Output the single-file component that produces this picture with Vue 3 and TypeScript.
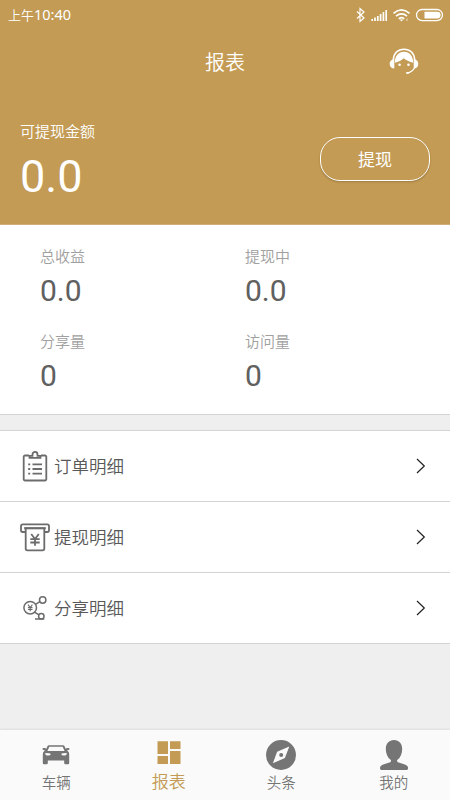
<script setup lang="ts">
import { ref } from 'vue';

interface Stat {
    label: string;
    value: string;
}

interface Entry {
    key: string;
    title: string;
}

const balance = ref('0.0');

const stats = ref<Stat[]>([
    { label: '总收益', value: '0.0' },
    { label: '提现中', value: '0.0' },
    { label: '分享量', value: '0' },
    { label: '访问量', value: '0' }
]);

const entries: Entry[] = [
    { key: 'order', title: '订单明细' },
    { key: 'withdraw', title: '提现明细' },
    { key: 'share', title: '分享明细' }
];

const tabs: Entry[] = [
    { key: 'car', title: '车辆' },
    { key: 'report', title: '报表' },
    { key: 'news', title: '头条' },
    { key: 'mine', title: '我的' }
];

// 当前选中的标签
const activeTab = ref('report');
</script>

<template>
    <div class="page">
        <header class="header">
            <!-- 状态栏 -->
            <div class="status">
                <span class="status-time">上午<span class="status-digits">10:40</span></span>
                <svg class="status-icons" width="90" height="16" viewBox="0 0 90 16" fill="none" stroke="#fff">
                    <path d="M2 4.5l7 6.5-4 3.5v-13l4 3.5-7 6.5" stroke-width="1.2" />
                    <path d="M17.2 14v-2M20 14v-3.5M22.8 14v-5M25.6 14v-7M28.4 14v-9M31.2 14v-11" stroke-width="1.7" />
                    <path d="M38.5 6.3q8-7 16 0M41 9.2q5.5-4.5 11 0M43.8 11.8q2.7-2.2 5.4 0" stroke-width="1.6" />
                    <path d="M44.7 12.4h3.6l-1.8 2z" fill="#fff" stroke="none" />
                    <path d="M52 11.5v2.5" stroke-width="1.3" opacity=".5" />
                    <rect x="61.5" y="2.5" width="26" height="11.2" rx="5.6" stroke-width="1.3" />
                    <path d="M69.5 4.7h12.7a3.4 3.4 0 0 1 0 6.8H69.5z" fill="#fff" stroke="none" />
                </svg>
            </div>
            <div class="navbar">
                <span class="navbar-title">报表</span>
                <svg class="service" width="30" height="28" viewBox="0 0 30 28" fill="#fff">
                    <path d="M4.3 12C4.5 5.2 9 1.2 15 1.2S25.5 5.2 25.7 12" fill="none" stroke="#fff" stroke-width="1.6" />
                    <path d="M5.8 14.8C5.8 8 9.5 3.8 15 3.8S24.2 8 24.2 14.8C20.5 13.8 16.5 12 14.6 10.2C12.5 12.2 9.7 14 5.8 14.800z" />
                    <path d="M5.3 11.3v9.200C2.500 20.500.7 18.500.7 16s1.800-4.700 4.600-4.700zM24.700 11.300v9.200c2.800 0 4.600-2 4.600-4.500s-1.800-4.700-4.600-4.700z" />
                    <circle cx="10.6" cy="16.8" r="1.3" />
                    <circle cx="19.5" cy="16.8" r="1.3" />
                    <path d="M25.7 19.5c-1.5 3-4 5-7.700 5.500" fill="none" stroke="#fff" stroke-width="1.2" />
                    <ellipse cx="18.5" cy="24.9" rx="1.6" ry=".9" />
                </svg>
            </div>
            <div class="balance">
                <div>
                    <div class="balance-label">可提现金额</div>
                    <div class="balance-value">{{ balance }}</div>
                </div>
                <button class="withdraw">提现</button>
            </div>
        </header>

        <!-- 数据统计 -->
        <section class="stats">
            <div v-for="item in stats" :key="item.label" class="stat">
                <div class="stat-label">{{ item.label }}</div>
                <div class="stat-value">{{ item.value }}</div>
            </div>
        </section>

        <!-- 明细入口 -->
        <section class="entries">
            <div v-for="item in entries" :key="item.key" class="entry">
                <svg class="entry-icon" width="30" height="32" viewBox="0 0 30 32" fill="none" stroke="#6c6c6c" stroke-width="1.8">
                    <template v-if="item.key === 'order'">
                        <path d="M9 5.5H5a1.3 1.3 0 0 0-1.3 1.3v22.4a1.3 1.3 0 0 0 1.3 1.3h20a1.3 1.3 0 0 0 1.3-1.3V6.800A1.3 1.3 0 0 0 25 5.5h-4" />
                        <path d="M9.5 7.8V5.900h3V4.400a2.500 2.500 0 0 1 5 0v1.500h3v1.900z" />
                        <path d="M8.2 14.3h2M12.5 14.3h9.500M8.2 19h2M12.5 19h9.500M8.2 23.6h2M12.5 23.6h9.500" />
                    </template>
                    <template v-else-if="item.key === 'withdraw'">
                        <path d="M5 11H2.7A1.7 1.7 0 0 1 1 9.3V5a1.7 1.7 0 0 1 1.7-1.7h24.6A1.7 1.7 0 0 1 29 5v4.3a1.7 1.7 0 0 1-1.7 1.7H25" />
                        <path d="M4.2 7.2h21.6" stroke-width="2.2" />
                        <path d="M5.7 7.2v20.4a1.8 1.8 0 0 0 1.8 1.8h15a1.8 1.8 0 0 0 1.8-1.8V7.2" />
                        <path d="M11.2 13l3.8 5 3.8-5M15 18v6.7M10.3 18.2h9.4M10.3 21.5h9.4" />
                    </template>
                    <template v-else>
                        <circle cx="10.2" cy="15.7" r="6.3" stroke-width="1.5" />
                        <circle cx="22.7" cy="8" r="3.2" stroke-width="1.5" />
                        <circle cx="21.3" cy="24.2" r="2.7" stroke-width="1.5" />
                        <path d="M15.5 12.3l4.4-2.6M14.6 20.2l4.3 2.6M15 26.9h9.3" stroke-width="1.5" />
                        <path d="M8 12.6l2.2 2.9 2.2-2.9M10.2 15.5v3.7M7.9 15.6h4.6M7.9 17.5h4.6" stroke-width="1.1" />
                    </template>
                </svg>
                <span class="entry-title">{{ item.title }}</span>
                <svg class="entry-arrow" width="10" height="16" viewBox="0 0 10 16" fill="none" stroke="#222" stroke-width="1.2">
                    <path d="M1 1l7.3 7L1 15" />
                </svg>
            </div>
        </section>

        <!-- 底部标签栏 -->
        <nav class="tabbar">
            <div
                v-for="tab in tabs"
                :key="tab.key"
                class="tab"
                :class="{ 'tab-active': tab.key === activeTab }"
                @click="activeTab = tab.key"
            >
                <svg class="tab-icon" width="30" height="30" viewBox="0 0 30 30" fill="currentColor">
                    <path
                        v-if="tab.key === 'car'"
                        fill-rule="evenodd"
                        d="M8 5.2h14q1.2 0 1.7 1.2L24.8 9q.4-1 1.5-1h1.2q1 0 1 .9t-1 1.1h-1.3l.5 1q1.5 1 1.5 3.3V23q0 1.200-1.200 1.200h-2.600q-1.200 0-1.200-1.200v-2.500H6.800V23q0 1.200-1.200 1.200H3q-1.200 0-1.200-1.200v-8.700Q1.800 12 3.300 11l.5-1H2.500q-1-.2-1-1.100T2.500 8h1.200q1.100 0 1.500 1l1.100-2.600Q6.800 5.200 8 5.200zM8.300 6.700L6.500 11h17l-1.800-4.300zM4.300 13q-.3 2.500 2.800 2.500 2.600 0 2.600-1.300 0-1.200-5.400-1.200zM25.700 13q-5.400 0-5.400 1.200 0 1.300 2.600 1.300 3.100 0 2.800-2.500z"
                    />
                    <path v-else-if="tab.key === 'report'" d="M3.5 1.2H14v12.900H3.5zM16 1.2h10.5V9H16zM3.5 16.100H14v7.800H3.5zM16 11h10.5v12.900H16z" />
                    <template v-else-if="tab.key === 'news'">
                        <path fill-rule="evenodd" d="M15 0a15 15 0 1 1 0 30 15 15 0 0 1 0-30zM23.300 6.500l-12.200 5.300L6.900 23.300l12-5.400z" />
                        <circle cx="15.2" cy="15.1" r="2" />
                    </template>
                    <path v-else d="M15 0c5 0 8.2 3.5 8.2 9 0 4.700-1.800 8.700-4.700 10.800-.7.600-.6 2 .4 2.400l7 2.200c2.200.7 3.200 2 3.200 3.800 0 1.200-.7 1.800-2 1.800H3c-1.300 0-2-.6-2-1.800 0-1.800 1-3.100 3.200-3.800l7-2.200c1-.4 1.100-1.800.4-2.400C8.600 17.700 6.800 13.700 6.800 9c0-5.500 3.200-9 8.200-9z" />
                </svg>
                <span class="tab-title">{{ tab.title }}</span>
            </div>
        </nav>
    </div>
</template>

<style>
body {
    margin: 0;
}
</style>

<style scoped>
.page {
    display: flex;
    flex-direction: column;
    width: 450px;
    height: 800px;
    overflow: hidden;
    background: #efefef;
    font-family: Roboto, "Noto Sans CJK SC", sans-serif;
    font-weight: 350;
}

.header {
    box-sizing: border-box;
    height: 225px;
    flex-shrink: 0;
    background: #c39b54;
    border-bottom: 1px solid #ceae76;
    color: #fff;
}

/* 状态栏 */
.status {
    display: flex;
    justify-content: space-between;
    height: 30px;
    padding: 0 5px 0 8px;
}

.status-time {
    font-size: 13px;
    line-height: 29px;
}

.status-digits {
    font-family: "Noto Sans", sans-serif;
    font-size: 14.5px;
    font-weight: 400;
}

.status-icons {
    margin-top: 7px;
}

/* 导航栏 */
.navbar {
    display: grid;
    grid-template-columns: 1fr auto 1fr;
    align-items: center;
    height: 64px;
    padding: 0 31px;
}

.navbar-title {
    grid-column: 2;
    padding-top: 2px;
    font-size: 20px;
    line-height: 30px;
}

.service {
    justify-self: end;
}

.balance {
    display: flex;
    justify-content: space-between;
    padding: 26px 20px 0;
}

.balance-label {
    padding-top: 1px;
    font-size: 15px;
    line-height: 22px;
}

.balance-value {
    margin-top: 7px;
    font-size: 45px;
    font-weight: 400;
    line-height: 53px;
}

.withdraw {
    box-sizing: border-box;
    width: 110px;
    height: 44px;
    margin-top: 17px;
    padding: 0 0 2px;
    border: 1.5px solid #fff;
    border-radius: 20px;
    background: #c39b54;
    box-shadow: 0 1px 2px rgba(0, 0, 0, 0.2);
    color: #fff;
    font-family: inherit;
    font-size: 17px;
}

/* 数据统计 */
.stats {
    display: grid;
    grid-template-columns: 205px 205px;
    grid-auto-rows: 84.5px;
    box-sizing: border-box;
    height: 190px;
    flex-shrink: 0;
    padding: 21px 0 0 40px;
    background: #fff;
    border-bottom: 1px solid #d4d4d4;
}

.stat-label {
    color: #a0a0a0;
    font-size: 15px;
    line-height: 22px;
}

.stat-value {
    margin-top: 5px;
    color: #606060;
    font-size: 30px;
    font-weight: 400;
    line-height: 36px;
}

/* 明细入口 */
.entries {
    margin-top: 15px;
    border-top: 1px solid #d4d4d4;
    background: #fff;
}

.entry {
    display: flex;
    align-items: center;
    height: 70px;
    padding: 0 24px 0 20px;
    border-bottom: 1px solid #d4d4d4;
}

.entry-icon {
    flex-shrink: 0;
}

.entry-title {
    flex: 1;
    padding-top: 2px;
    margin-left: 4px;
    color: #585858;
    font-size: 17.5px;
    line-height: 26px;
}

/* 底部标签栏 */
.tabbar {
    display: flex;
    height: 70px;
    margin-top: auto;
    background: #fafafa;
    box-shadow: 0 -1px 2px rgba(0, 0, 0, 0.08);
}

.tab {
    display: flex;
    flex: 1;
    flex-direction: column;
    align-items: center;
    padding-top: 10px;
    color: #757575;
    cursor: pointer;
}

.tab-title {
    margin-top: 2px;
    font-size: 14.5px;
    line-height: 23px;
}

.tab-active {
    color: #c39b54;
}

.tab-active .tab-title {
    margin-top: 0;
    font-size: 17px;
    line-height: 24px;
}
</style>
